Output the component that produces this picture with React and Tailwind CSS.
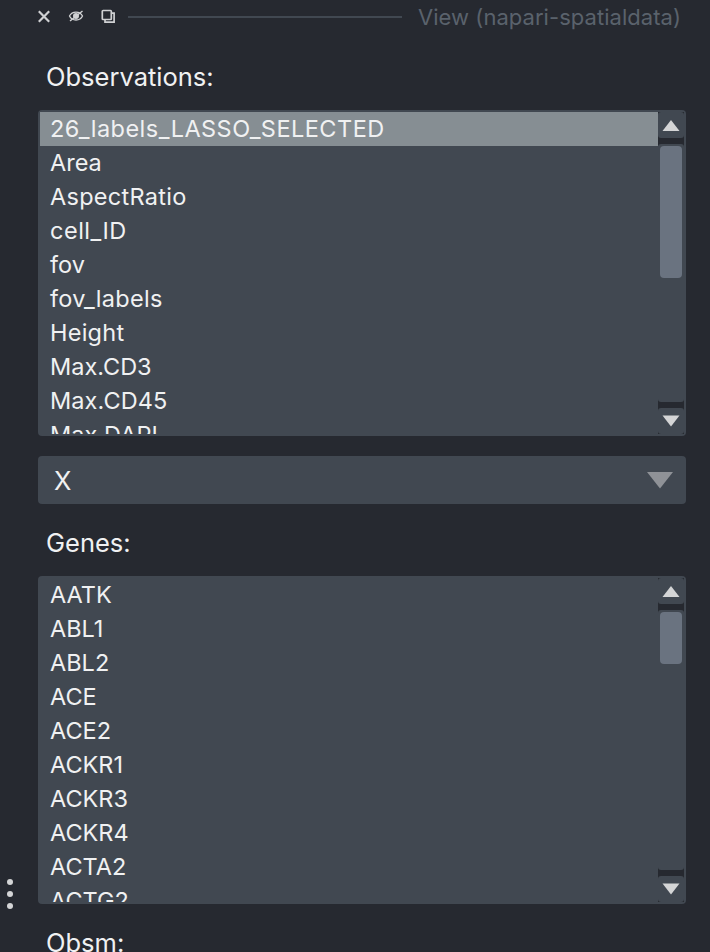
const observations = [
  { name: '26_labels_LASSO_SELECTED', selected: true, tracking: 'tracking-[0.47px]' },
  { name: 'Area' },
  { name: 'AspectRatio', tracking: 'tracking-[0.28px]' },
  { name: 'cell_ID', tracking: 'tracking-[0.5px]' },
  { name: 'fov' },
  { name: 'fov_labels', tracking: 'tracking-[0.32px]' },
  { name: 'Height', tracking: 'tracking-[0.25px]' },
  { name: 'Max.CD3' },
  { name: 'Max.CD45', tracking: 'tracking-[0.1px]' },
  { name: 'Max.DAPI' },
];

const genes = ['AATK', 'ABL1', 'ABL2', 'ACE', 'ACE2', 'ACKR1', 'ACKR3', 'ACKR4', 'ACTA2', 'ACTG2'].map((name) => ({ name }));

function ArrowButton({ down }) {
  return (
    <div className="flex h-[26px] shrink-0 items-center justify-center rounded-[3px] bg-[#414851]">
      <svg width="18" height="12" viewBox="0 0 18 12">
        <path d={down ? 'M0.5 0.5H17.5L9 11.5Z' : 'M0.5 12H17.5L9 1Z'} fill="#d4d5d6" />
      </svg>
    </div>
  );
}

function ListBox({ items, heightClass, thumbClass }) {
  return (
    <div className={`flex rounded-[4px] bg-[#414851] p-[2px] ${heightClass}`}>
      <ul className="min-w-0 flex-1 overflow-hidden">
        {items.map((item) => (
          <li
            key={item.name}
            className={`h-[34px] pl-[10px] text-[23.5px] leading-[34px] whitespace-nowrap ${item.tracking ?? ''} ${item.selected ? 'bg-[#868e93]' : ''}`}
          >
            {item.name}
          </li>
        ))}
      </ul>
      <div className="flex w-[26px] flex-col gap-[6px] bg-[#262930]">
        <ArrowButton />
        <div className="flex-1 rounded-[3px] bg-[#414851] p-[2px]">
          <div className={`rounded-[4px] bg-[#6a7380] ${thumbClass}`} />
        </div>
        <ArrowButton down />
      </div>
    </div>
  );
}

function TitleBar() {
  return (
    <header className="flex h-[34px] items-center pl-[37px] pr-[29px]">
      <svg width="82" height="20" viewBox="0 0 82 20" className="-translate-y-[0.5px]" fill="none" stroke="#d0d1d3">
        <path d="M1.8 4.8L12.2 15.2M12.2 4.8L1.8 15.2" strokeWidth="2.2" />
        <path d="M32.5 9.5C35 4.2 43 4.2 45.5 9.5C43 14.8 35 14.8 32.5 9.5Z" strokeWidth="1.3" />
        <circle cx="39" cy="9.5" r="3" fill="#d0d1d3" stroke="none" />
        <path d="M33 14.5L45.5 4.5" strokeWidth="1.4" />
        <rect x="65.3" y="4" width="9" height="9" rx="0.8" strokeWidth="1.7" />
        <path d="M68 13.5V15.6H77.1V6.6H74.8" strokeWidth="1.7" />
      </svg>
      <div className="ml-[9px] h-[2px] w-[274px] bg-[#414851]" />
      <h1 className="ml-auto text-[22px] leading-[34px] tracking-[0.04px] whitespace-nowrap text-[#5a626c]">View (napari-spatialdata)</h1>
    </header>
  );
}

export default function App() {
  return (
    <div className="relative h-[952px] w-[710px] overflow-hidden bg-[#262930] font-['Inter','Liberation_Sans',sans-serif] text-[#f0f1f2]">
      <TitleBar />
      <main className="flex flex-col pl-[38px] pr-[24px]">
        <h2 className="h-[76px] pl-[8px] pt-[27px] text-[25.5px] leading-[32px]">Observations:</h2>
        <ListBox items={observations} heightClass="h-[326px]" thumbClass="h-[132px]" />
        <div className="mt-[20px] flex h-[48px] items-center justify-between rounded-[4px] bg-[#414851] pl-[16px] pr-[12px] text-[25.5px]">
          <span className="pt-[2px]">X</span>
          <svg width="28" height="18" viewBox="0 0 28 18">
            <path d="M1 1H27L14 17.5Z" fill="#8f9297" />
          </svg>
        </div>
        <h2 className="h-[72px] pl-[8px] pt-[23px] text-[25.5px] leading-[32px]">Genes:</h2>
        <ListBox items={genes} heightClass="h-[328px]" thumbClass="h-[52px]" />
        <h2 className="pl-[8px] pt-[23px] text-[25.5px] leading-[32px]">Obsm:</h2>
      </main>
      <div className="absolute left-[7px] top-[879px] flex flex-col gap-[6px]">
        <i className="size-[6px] rounded-full bg-[#d4d5d6]" />
        <i className="size-[6px] rounded-full bg-[#d4d5d6]" />
        <i className="size-[6px] rounded-full bg-[#d4d5d6]" />
      </div>
    </div>
  );
}
